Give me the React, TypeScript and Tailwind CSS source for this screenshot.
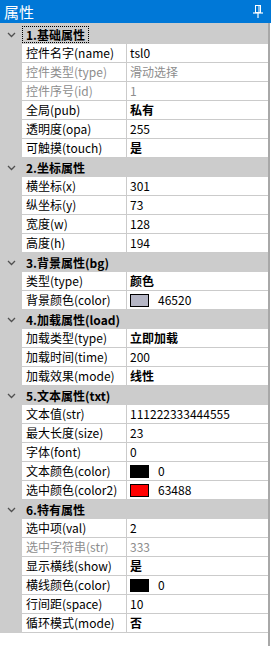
import React from 'react';

type Item = {
  name: string;
  value: string;
  disabled?: boolean;
  bold?: boolean;
  swatch?: string;
};

type Group = { title: string; items: Item[] };

const groups: Group[] = [
  {
    title: '1.基础属性',
    items: [
      { name: '控件名字(name)', value: 'tsl0' },
      { name: '控件类型(type)', value: '滑动选择', disabled: true },
      { name: '控件序号(id)', value: '1', disabled: true },
      { name: '全局(pub)', value: '私有', bold: true },
      { name: '透明度(opa)', value: '255' },
      { name: '可触摸(touch)', value: '是', bold: true },
    ],
  },
  {
    title: '2.坐标属性',
    items: [
      { name: '横坐标(x)', value: '301' },
      { name: '纵坐标(y)', value: '73' },
      { name: '宽度(w)', value: '128' },
      { name: '高度(h)', value: '194' },
    ],
  },
  {
    title: '3.背景属性(bg)',
    items: [
      { name: '类型(type)', value: '颜色', bold: true },
      { name: '背景颜色(color)', value: '46520', swatch: 'bg-[#b5b6c5]' },
    ],
  },
  {
    title: '4.加载属性(load)',
    items: [
      { name: '加载类型(type)', value: '立即加载', bold: true },
      { name: '加载时间(time)', value: '200' },
      { name: '加载效果(mode)', value: '线性', bold: true },
    ],
  },
  {
    title: '5.文本属性(txt)',
    items: [
      { name: '文本值(str)', value: '111222333444555' },
      { name: '最大长度(size)', value: '23' },
      { name: '字体(font)', value: '0' },
      { name: '文本颜色(color)', value: '0', swatch: 'bg-black' },
      { name: '选中颜色(color2)', value: '63488', swatch: 'bg-[#ff0000]' },
    ],
  },
  {
    title: '6.特有属性',
    items: [
      { name: '选中项(val)', value: '2' },
      { name: '选中字符串(str)', value: '333', disabled: true },
      { name: '显示横线(show)', value: '是', bold: true },
      { name: '横线颜色(color)', value: '0', swatch: 'bg-black' },
      { name: '行间距(space)', value: '10' },
      { name: '循环模式(mode)', value: '否', bold: true },
    ],
  },
];

const Chevron = () => (
  <svg width="9" height="6" viewBox="0 0 9 6" className="block">
    <polyline points="1,1 4.5,4.5 8,1" fill="none" stroke="#505050" strokeWidth="1.3" />
  </svg>
);

const Pin = () => (
  <svg width="10" height="13" viewBox="0 0 10 13" className="block">
    <rect x="2.5" y="0.5" width="5" height="7" fill="none" stroke="#fff" strokeWidth="1" />
    <line x1="6" y1="1" x2="6" y2="7" stroke="#fff" strokeWidth="1" />
    <line x1="0" y1="8" x2="10" y2="8" stroke="#fff" strokeWidth="1.2" />
    <line x1="5" y1="8" x2="5" y2="13" stroke="#fff" strokeWidth="1.2" />
  </svg>
);

const App = () => {
  return (
    <div
      className="w-[271px] h-[646px] bg-white flex flex-col overflow-hidden text-[12px] leading-none"
      style={{ fontFamily: '"Noto Sans CJK SC", "Noto Sans", sans-serif' }}
    >
      {/* Title bar */}
      <div className="h-[23px] bg-[#0078d7] flex items-center justify-between pl-[4px] pr-[8px] shrink-0">
        <span className="text-white text-[15px]">属性</span>
        <Pin />
      </div>

      {/* Property grid */}
      <div className="flex-1 mr-px border-r-2 border-[#a8a8a8] flex flex-col">
        <div className="h-[2px] bg-[#cccccc] shrink-0" />
        {groups.map((group, gi) => (
          <div key={gi}>
            <div className="h-[19px] bg-[#cccccc] flex items-center">
              <div className="w-[22px] flex justify-center">
                <Chevron />
              </div>
              <span
                className={
                  gi === 0
                    ? 'font-bold text-black h-[17px] flex items-center px-[3px] border border-dotted border-black'
                    : 'font-bold text-black px-[4px]'
                }
              >
                {group.title}
              </span>
            </div>
            {group.items.map((item, ii) => (
              <div key={ii} className="h-[19px] flex">
                <div className="w-[22px] bg-[#cccccc] shrink-0" />
                <div
                  className={`w-[105px] shrink-0 border-r border-b border-[#cbcbcb] flex items-center pl-[4px] whitespace-nowrap ${
                    item.disabled ? 'text-[#8d8d8d]' : 'text-black'
                  }`}
                >
                  {item.name}
                </div>
                <div
                  className={`flex-1 border-b border-[#cbcbcb] flex items-center pl-[3px] ${
                    item.disabled ? 'text-[#8d8d8d]' : 'text-black'
                  } ${item.bold ? 'font-bold' : ''}`}
                >
                  {item.swatch && (
                    <span className={`w-[19px] h-[13px] border border-black mr-[9px] ${item.swatch}`} />
                  )}
                  {item.value}
                </div>
              </div>
            ))}
          </div>
        ))}
      </div>
    </div>
  );
};

export default App;
